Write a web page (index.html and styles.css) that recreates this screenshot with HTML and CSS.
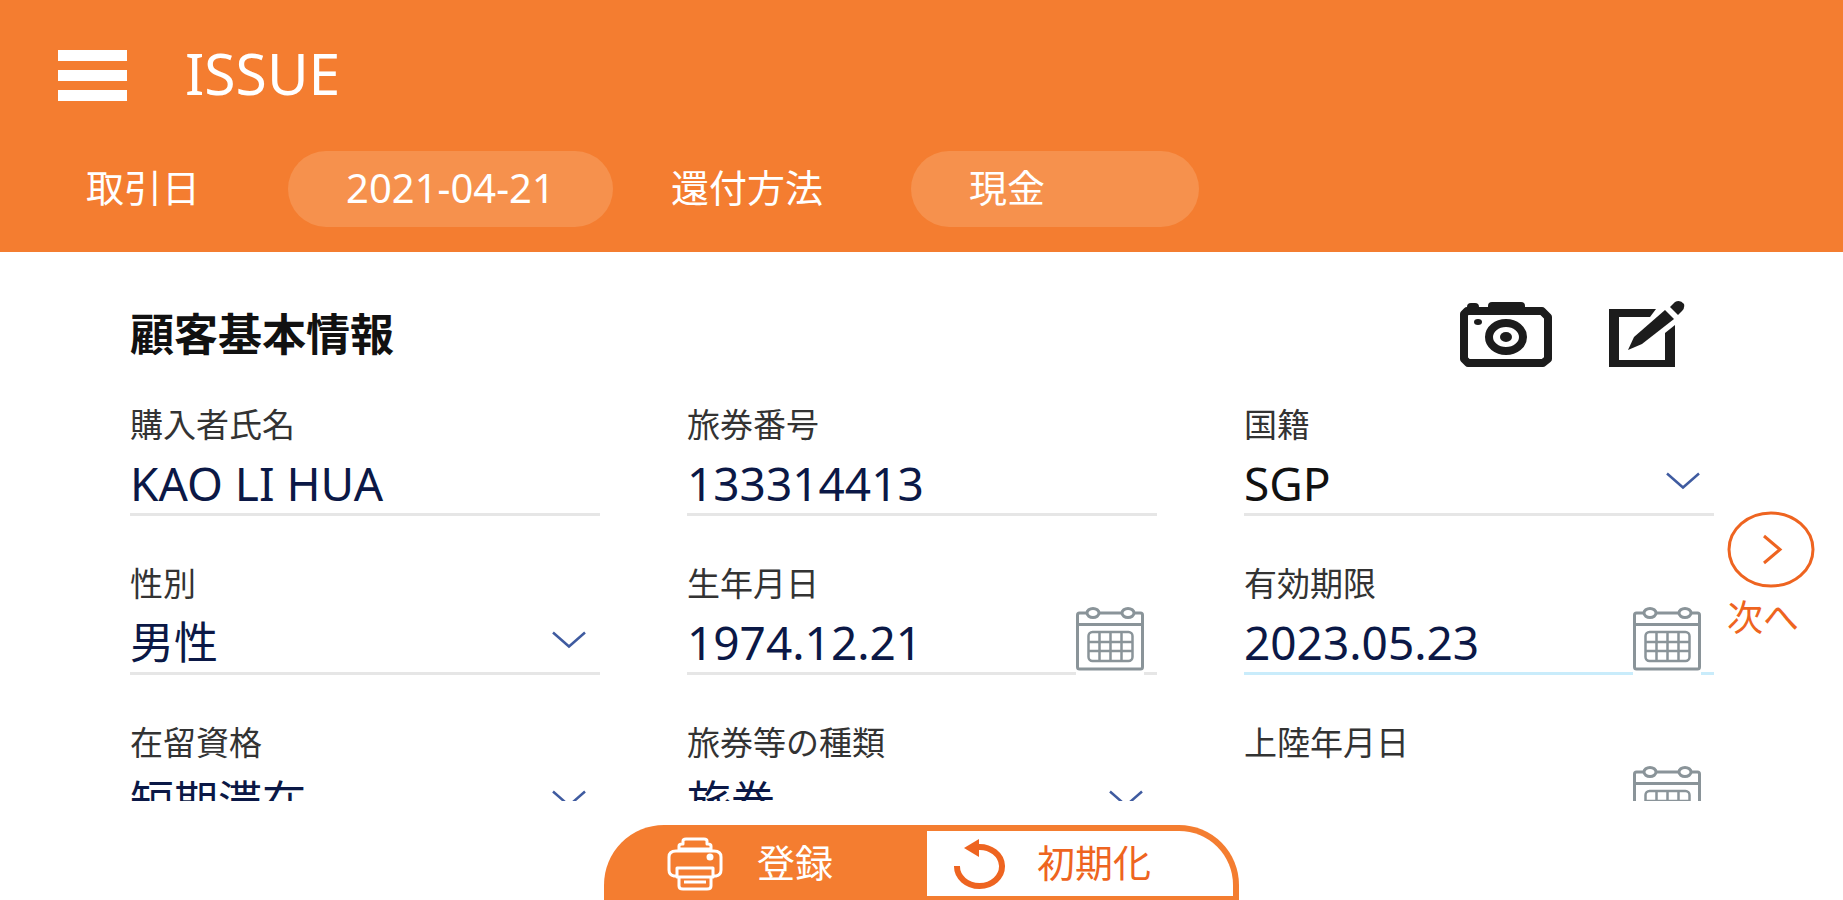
FILE: index.html
```html
<!DOCTYPE html>
<html lang="ja">
<head>
    <meta charset="UTF-8">
    <meta name="viewport" content="width=device-width, initial-scale=1.0">
    <title>ISSUE</title>
    <link rel="stylesheet" href="styles.css">
</head>
<body>
    <!-- 共通アイコン -->
    <svg class="icon-defs" aria-hidden="true">
        <symbol id="chevron" viewBox="0 0 34 18">
            <path d="M1 1.500 17 15.500 33 1.500" fill="none" stroke="#3f5ba0" stroke-width="2.500"/>
        </symbol>
        <symbol id="calendar" viewBox="0 0 68 64">
            <g fill="none" stroke="#8a9499" stroke-width="3">
                <path d="M11 6H3.500a2 2 0 0 0-2 2v52a2 2 0 0 0 2 2h61a2 2 0 0 0 2-2V8a2 2 0 0 0-2-2H58M24 6h22M2 17.500h64"/>
                <ellipse cx="17" cy="6" rx="6" ry="4.500"/>
                <ellipse cx="52" cy="6" rx="6" ry="4.500"/>
                <rect x="12.500" y="25" width="44" height="29" rx="4" stroke-width="2.500"/>
                <path d="M23.500 25v29M34.500 25v29M45.500 25v29M12.500 35h44M12.500 44h44" stroke-width="2.500"/>
            </g>
        </symbol>
    </svg>

    <header class="header">
        <div class="title-bar">
            <button type="button" class="menu-btn" aria-label="メニュー">
                <span></span><span></span><span></span>
            </button>
            <h1>ISSUE</h1>
        </div>
        <div class="filters">
            <label for="tradeDate">取引日</label>
            <input type="text" id="tradeDate" class="pill pill-date" value="2021-04-21">
            <label for="refundMethod">還付方法</label>
            <select id="refundMethod" class="pill pill-method">
                <option>現金</option>
            </select>
        </div>
    </header>

    <main class="main">
        <section class="customer">
            <div class="section-head">
                <h2>顧客基本情報</h2>
                <div class="tools">
                    <button type="button" aria-label="撮影">
                        <svg width="94" height="68" viewBox="0 0 94 68">
                            <path d="M8 11h75l6 6v42l-5 4H9l-4-4V14z" fill="none" stroke="#1c1c1c" stroke-width="8" stroke-linejoin="round"/>
                            <rect x="29" y="2" width="37" height="9" rx="4" fill="#1c1c1c"/>
                            <rect x="8" y="3" width="12" height="8" rx="4" fill="#1c1c1c"/>
                            <ellipse cx="19" cy="22" rx="4" ry="3" fill="#1c1c1c"/>
                            <ellipse cx="47" cy="37" rx="17" ry="14" fill="none" stroke="#1c1c1c" stroke-width="8"/>
                            <ellipse cx="47" cy="37" rx="6" ry="5" fill="#1c1c1c"/>
                        </svg>
                    </button>
                    <button type="button" aria-label="編集">
                        <svg width="77" height="68" viewBox="0 0 77 68">
                            <path d="M48 9 42 17H11v43h46V33l10-8v42H1V9z" fill="#1c1c1c"/>
                            <path d="M57 10 66 19 34 44 20 50 26 37z" fill="#1c1c1c"/>
                            <path d="M62 7 67 2q5-3 9 2 1 4-2 7l-4 4z" fill="#1c1c1c"/>
                        </svg>
                    </button>
                </div>
            </div>

            <form class="fields">
                <div class="field">
                    <label for="buyerName">購入者氏名</label>
                    <div class="control"><input type="text" id="buyerName" value="KAO LI HUA"></div>
                </div>
                <div class="field">
                    <label for="passportNo">旅券番号</label>
                    <div class="control"><input type="text" id="passportNo" value="133314413"></div>
                </div>
                <div class="field">
                    <label for="nationality">国籍</label>
                    <div class="control">
                        <select id="nationality" class="nation"><option>SGP</option></select>
                        <svg class="chevron"><use href="#chevron"/></svg>
                    </div>
                </div>
                <div class="field">
                    <label for="gender">性別</label>
                    <div class="control">
                        <select id="gender" class="kanji"><option>男性</option></select>
                        <svg class="chevron"><use href="#chevron"/></svg>
                    </div>
                </div>
                <div class="field">
                    <label for="birthday">生年月日</label>
                    <div class="control">
                        <input type="text" id="birthday" value="1974.12.21">
                        <button type="button" class="cal-btn" aria-label="生年月日を選択"><svg><use href="#calendar"/></svg></button>
                    </div>
                </div>
                <div class="field">
                    <label for="expiry">有効期限</label>
                    <div class="control active">
                        <input type="text" id="expiry" value="2023.05.23">
                        <button type="button" class="cal-btn" aria-label="有効期限を選択"><svg><use href="#calendar"/></svg></button>
                    </div>
                </div>
                <div class="field">
                    <label for="status">在留資格</label>
                    <div class="control">
                        <select id="status" class="kanji"><option>短期滞在</option></select>
                        <svg class="chevron"><use href="#chevron"/></svg>
                    </div>
                </div>
                <div class="field">
                    <label for="passportType">旅券等の種類</label>
                    <div class="control">
                        <select id="passportType" class="kanji"><option>旅券</option></select>
                        <svg class="chevron"><use href="#chevron"/></svg>
                    </div>
                </div>
                <div class="field">
                    <label for="landing">上陸年月日</label>
                    <div class="control">
                        <input type="text" id="landing" value="">
                        <button type="button" class="cal-btn" aria-label="上陸年月日を選択"><svg><use href="#calendar"/></svg></button>
                    </div>
                </div>
            </form>
        </section>

        <aside class="side">
            <button type="button" class="next-btn">
                <svg width="88" height="77" viewBox="0 0 88 77" fill="none" stroke="#ee6420" stroke-width="3">
                    <ellipse cx="44" cy="38.500" rx="42" ry="36.500"/>
                    <path d="M37 25 53 38.500 37 52"/>
                </svg>
                <span>次へ</span>
            </button>
        </aside>
    </main>

    <footer class="footer">
        <div class="actions">
            <button type="button" class="register-btn">
                <svg width="56" height="54" viewBox="0 0 56 54" fill="none" stroke="#fff" stroke-width="3" stroke-linejoin="round">
                    <path d="M12 14V9q0-2 3-2h1V4q0-2 3-2h18q3 0 3 2v3h1q3 0 3 2v5"/>
                    <path d="M10 39H7q-5-1-5-6V20q0-6 7-6h38q7 0 7 6v13q0 5-5 6h-3"/>
                    <path d="M10 31h36v9H10zM12 40v9q0 3 4 3h24q4 0 4-3v-9M17 45h22M12 12h32"/>
                    <circle cx="43" cy="20" r="2" fill="#fff"/>
                </svg>
                <span>登録</span>
            </button>
            <button type="button" class="reset-btn">
                <svg width="54" height="50" viewBox="0 0 54 50">
                    <path d="M4 27a22.500 19.500 0 1 0 21-19" fill="none" stroke="#ee6420" stroke-width="6"/>
                    <path d="M11 9 26 0v18z" fill="#ee6420"/>
                </svg>
                <span>初期化</span>
            </button>
        </div>
    </footer>
</body>
</html>
```
FILE: styles.css
```css
* {
    box-sizing: border-box;
}

body {
    display: flex;
    flex-direction: column;
    height: 100vh;
    margin: 0;
    overflow: hidden;
    background: #fff;
    font-family: "Noto Sans", "Noto Sans CJK JP", sans-serif;
}

button, input, select {
    margin: 0;
    padding: 0;
    border: 0;
    background: none;
    color: inherit;
    font-family: inherit;
    appearance: none;
    outline: none;
}

svg {
    display: block;
}

h1, h2 {
    margin: 0;
}

.icon-defs {
    position: absolute;
    width: 0;
    height: 0;
}

/* ヘッダー */
.header {
    flex: none;
    padding: 50px 58px 25px;
    background: #f47d30;
    color: #fff;
}

.title-bar {
    display: flex;
    align-items: flex-start;
    gap: 58px;
    height: 51px;
    margin-bottom: 50px;
}

.title-bar h1 {
    font-size: 57px;
    font-weight: 400;
    line-height: 46px;
}

.menu-btn {
    display: flex;
    flex-direction: column;
    justify-content: space-between;
    width: 69px;
    height: 51px;
}

.menu-btn span {
    height: 11px;
    background: #fff;
}

.filters {
    display: flex;
    align-items: flex-start;
    padding-left: 28px;
    font-size: 38px;
    line-height: 72px;
}

.filters label {
    margin-right: 88px;
}

.pill {
    height: 76px;
    padding: 0 58px 4px;
    border-radius: 38px;
    background: #f6914d;
    font-size: 38px;
}

.pill-date {
    width: 325px;
    padding-right: 0;
    margin-right: 58px;
    font-size: 40px;
}

.pill-method {
    width: 288px;
}

/* 入力エリア */
.main {
    display: flex;
    flex: 1;
    min-height: 0;
    overflow: hidden;
}

.customer {
    flex: 1;
    padding: 48px 0 0 130px;
}

.section-head {
    display: flex;
    align-items: center;
    justify-content: space-between;
    height: 68px;
    margin-bottom: 35px;
    padding-right: 29px;
}

.section-head h2 {
    color: #111;
    font-size: 44px;
    line-height: 68px;
}

.tools {
    display: flex;
    gap: 55px;
}

.fields {
    display: grid;
    grid-template-columns: repeat(3, 1fr);
    gap: 46px 87px;
}

.field label {
    display: block;
    color: #333;
    font-size: 33px;
    line-height: 44px;
}

.control {
    display: flex;
    position: relative;
    align-items: center;
    height: 69px;
    border-bottom: 3px solid #e6e6e6;
    color: #0b1846;
}

.control.active {
    border-color: #c9ecfb;
}

.control input,
.control select {
    width: 100%;
    height: 66px;
    padding-top: 5px;
    font-size: 46px;
}

.control .kanji {
    font-size: 44px;
}

.control .nation {
    color: #111;
}

.chevron {
    position: absolute;
    top: 25px;
    right: 14px;
    width: 34px;
    height: 18px;
    pointer-events: none;
}

/* カレンダーは下線の上に重なる */
.cal-btn {
    position: absolute;
    right: 13px;
    bottom: -3px;
    padding-bottom: 4px;
    background: #fff;
}

.cal-btn svg {
    width: 68px;
    height: 64px;
}

.side {
    flex: none;
    width: 129px;
    padding: 259px 0 0 13px;
}

.next-btn {
    color: #ee6420;
    font-size: 36px;
    line-height: 60px;
    text-align: left;
}

.next-btn span {
    display: block;
}

/* フッター */
.footer {
    display: flex;
    flex: none;
    justify-content: center;
    height: 99px;
    padding-top: 24px;
}

.actions {
    display: flex;
    width: 635px;
    padding: 6px 6px 4px 0;
    border-radius: 60px 60px 0 0;
    background: #f47d30;
}

.actions button {
    display: flex;
    align-items: center;
    font-size: 38px;
    line-height: 56px;
}

.actions span {
    padding-bottom: 3px;
}

.register-btn {
    gap: 34px;
    width: 323px;
    padding-left: 63px;
    color: #fff;
}

.actions .reset-btn {
    flex: 1;
    gap: 30px;
    padding-left: 26px;
    border-radius: 0 54px 0 0;
    background: #fff;
    color: #ee6420;
}
```
